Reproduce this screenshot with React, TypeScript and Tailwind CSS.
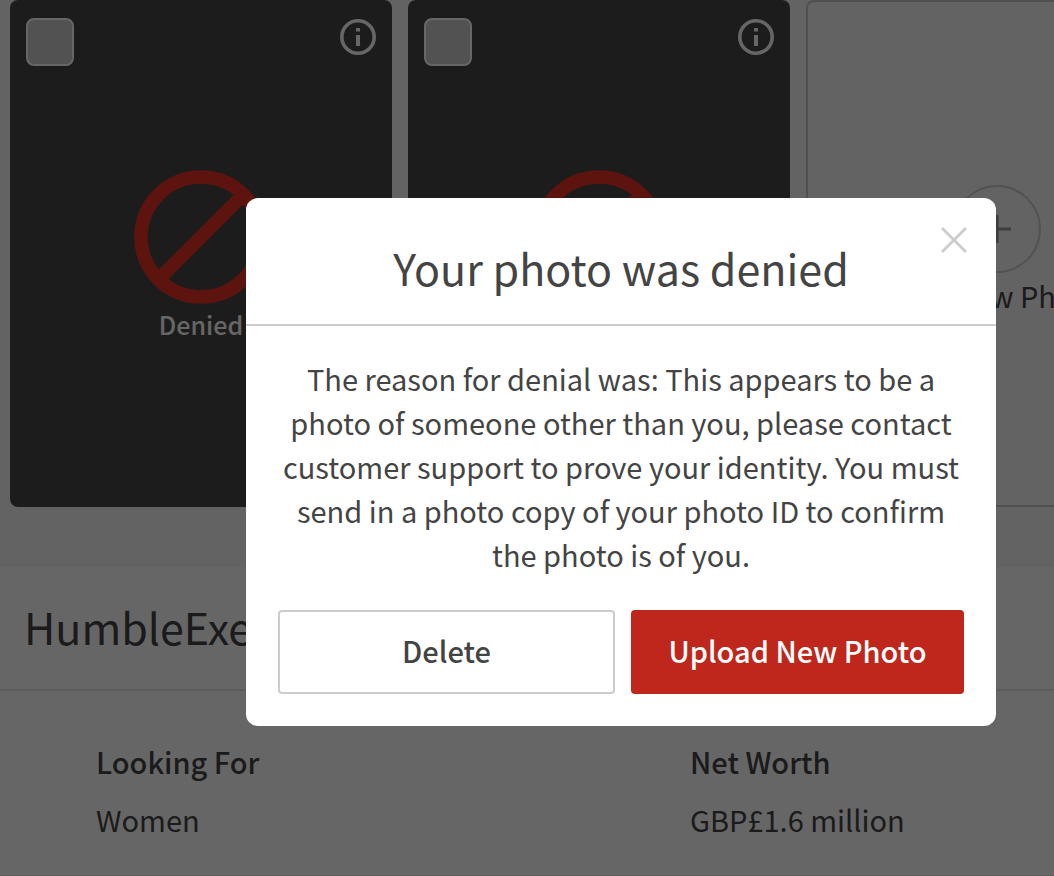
const photos = [
  { id: "photo-1", status: "Denied" },
  { id: "photo-2", status: "Denied" },
];

const details = [
  { label: "Looking For", value: "Women" },
  { label: "Net Worth", value: "GBP£1.6 million" },
];

function InfoIcon() {
  return (
    <svg className="w-9 h-9" viewBox="0 0 36 36" fill="none">
      <circle cx="18" cy="18" r="16.2" stroke="currentColor" strokeWidth="3.6" />
      <path d="M16 9h4v3.4h-4zM16 16h4v11h-4z" fill="currentColor" />
    </svg>
  );
}

function DeniedIcon() {
  return (
    <svg className="w-[134px] h-[134px]" viewBox="0 0 134 134" fill="none" stroke="#e83223" strokeWidth="13.6">
      <circle cx="67" cy="67" r="60" />
      <path d="M25 109 109 25" />
    </svg>
  );
}

function PlusIcon() {
  return (
    <svg className="w-7 h-7" viewBox="0 0 28 28" fill="none" stroke="#999" strokeWidth="3" strokeLinecap="round">
      <path d="M14 1v26M1 14h26" />
    </svg>
  );
}

function CloseIcon() {
  return (
    <svg className="w-6 h-6 overflow-visible" viewBox="0 0 24 24" fill="none" stroke="currentColor" strokeWidth="2.8">
      <path d="M0 0l24 24M24 0L0 24" />
    </svg>
  );
}

function PhotoCard({ id, status }: { id: string; status: string }) {
  return (
    <div className="relative w-[382px] h-[507px] shrink-0 rounded-lg bg-[#474747] flex flex-col items-center pt-[170px] text-white">
      <input
        type="checkbox"
        id={id}
        aria-label="Select photo"
        className="absolute left-4 top-[18px] w-12 h-12 appearance-none rounded-lg border-2 border-white bg-[#cecece]"
      />
      <button type="button" aria-label="Photo info" className="absolute right-4 top-[19px]">
        <InfoIcon />
      </button>
      <DeniedIcon />
      <p className="text-[25px] leading-10 font-medium">{status}</p>
    </div>
  );
}

function DeniedDialog() {
  return (
    <div className="fixed inset-0 bg-black/60 flex items-start justify-end pt-[198px] pl-4 pr-[58px]">
      <div
        role="dialog"
        aria-modal="true"
        aria-labelledby="dialog-title"
        className="relative w-full max-w-[750px] rounded-xl bg-white text-center"
      >
        <button type="button" aria-label="Close" className="absolute right-[30px] top-[30px] text-[#ccc]">
          <CloseIcon />
        </button>

        <div className="border-b-2 border-[#ccc] px-8 pt-10 pb-7">
          <h2 id="dialog-title" className="text-[43px] leading-[58px]">
            Your photo was denied
          </h2>
        </div>

        <div className="px-8 pt-[30px] pb-8">
          <p className="text-[29px] leading-11">
            The reason for denial was: This appears to be a photo of someone other than you, please
            contact customer support to prove your identity. You must send in a photo copy of your
            photo ID to confirm the photo is of you.
          </p>

          <div className="mt-[34px] flex gap-4 text-[29px] font-medium">
            <button type="button" className="flex-1 h-[84px] pb-[2px] rounded border-2 border-[#ccc]">
              Delete
            </button>
            <button
              type="button"
              className="flex-1 h-[84px] pb-[2px] rounded bg-[#bf271c] text-white whitespace-nowrap"
            >
              Upload New Photo
            </button>
          </div>
        </div>
      </div>
    </div>
  );
}

export default function App() {
  return (
    <div className="min-h-screen overflow-hidden bg-white text-[#444] font-['Noto_Sans_CJK_JP','Source_Sans_Pro',sans-serif]">
      {/* Photo strip */}
      <section className="flex gap-4 overflow-hidden bg-[#f7f7f7] pl-[10px] pb-[60px]">
        {photos.map((photo) => (
          <PhotoCard key={photo.id} id={photo.id} status={photo.status} />
        ))}
        <button
          type="button"
          className="w-[382px] h-[507px] shrink-0 rounded-lg border-2 border-[#c8c8c8] flex flex-col items-center pt-[183px]"
        >
          <span className="w-[88px] h-[88px] rounded-full border-2 border-[#ccc] flex items-center justify-center">
            <PlusIcon />
          </span>
          <span className="text-[29px] leading-11">Add New Photo</span>
        </button>
      </section>

      {/* Profile */}
      <section className="border-b-2 border-[#e6e6e6]">
        <div className="border-b-2 border-[#e6e6e6] px-6 pt-[30px] pb-[34px]">
          <h1 className="text-[43px] leading-[58px]">HumbleExec</h1>
        </div>
        <dl className="flex overflow-hidden pl-24 pt-12 pb-[34px] text-[29px]">
          {details.map((item) => (
            <div key={item.label} className="w-[594px] shrink-0">
              <dt className="leading-11 font-medium">{item.label}</dt>
              <dd className="mt-[14px] leading-11">{item.value}</dd>
            </div>
          ))}
        </dl>
      </section>

      <DeniedDialog />
    </div>
  );
}
